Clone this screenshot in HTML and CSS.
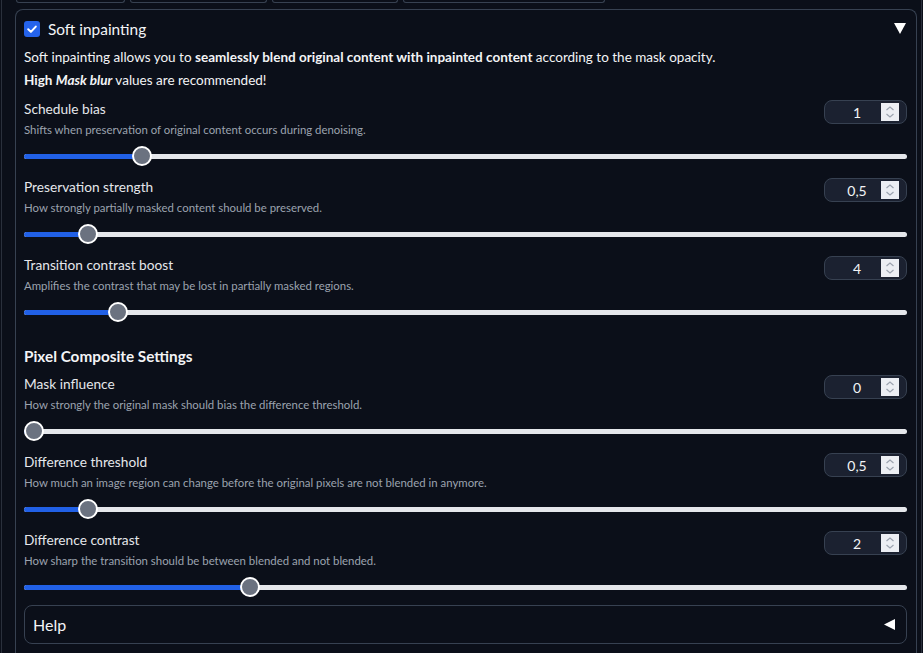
FILE: index.html
```html
<!DOCTYPE html>
<html>
<head>
<meta charset="utf-8">
<link rel="stylesheet" href="styles.css">
</head>
<body>
<div class="page">
  <div class="tabs">
    <span class="tab tab1"></span>
    <span class="tab tab2"></span>
    <span class="tab tab3"></span>
    <span class="tab tab4"></span>
  </div>
  <div class="panel">
    <div class="panel-head">
      <div class="head-left">
        <span class="checkbox">
          <svg viewBox="0 0 16 16" width="16" height="16"><path d="M4.2 8.3 L6.9 10.9 L11.8 5.6" fill="none" stroke="#ffffff" stroke-width="2" stroke-linecap="round" stroke-linejoin="round"/></svg>
        </span>
        <span class="title">Soft inpainting</span>
      </div>
      <svg class="caret" viewBox="0 0 12 11" width="12" height="11"><polygon points="0,0 12,0 6,11" fill="#ffffff"/></svg>
    </div>
    <div class="intro">
      <p>Soft inpainting allows you to <b>seamlessly blend original content with inpainted content</b> according to the mask opacity.</p>
      <p><b>High <i>Mask blur</i></b> values are recommended!</p>
    </div>

    <div class="row">
      <div class="row-head">
        <div class="labels">
          <div class="label">Schedule bias</div>
          <div class="desc">Shifts when preservation of original content occurs during denoising.</div>
        </div>
        <div class="num"><span class="val">1</span><span class="spin"><svg viewBox="0 0 18 18" width="18" height="18"><path d="M5.5 7 L9 4 L12.5 7 M5.5 11 L9 14 L12.5 11" fill="none" stroke="#9ca3af" stroke-width="1.2"/></svg></span></div>
      </div>
      <div class="slider"><div class="track"><div class="rail"><div class="fill" style="width:12.5%"></div><div class="thumb" style="left:12.5%"></div></div></div></div>
    </div>

    <div class="row">
      <div class="row-head">
        <div class="labels">
          <div class="label">Preservation strength</div>
          <div class="desc">How strongly partially masked content should be preserved.</div>
        </div>
        <div class="num"><span class="val">0,5</span><span class="spin"><svg viewBox="0 0 18 18" width="18" height="18"><path d="M5.5 7 L9 4 L12.5 7 M5.5 11 L9 14 L12.5 11" fill="none" stroke="#9ca3af" stroke-width="1.2"/></svg></span></div>
      </div>
      <div class="slider"><div class="track"><div class="rail"><div class="fill" style="width:6.25%"></div><div class="thumb" style="left:6.25%"></div></div></div></div>
    </div>

    <div class="row">
      <div class="row-head">
        <div class="labels">
          <div class="label">Transition contrast boost</div>
          <div class="desc">Amplifies the contrast that may be lost in partially masked regions.</div>
        </div>
        <div class="num"><span class="val">4</span><span class="spin"><svg viewBox="0 0 18 18" width="18" height="18"><path d="M5.5 7 L9 4 L12.5 7 M5.5 11 L9 14 L12.5 11" fill="none" stroke="#9ca3af" stroke-width="1.2"/></svg></span></div>
      </div>
      <div class="slider"><div class="track"><div class="rail"><div class="fill" style="width:9.68%"></div><div class="thumb" style="left:9.68%"></div></div></div></div>
    </div>

    <h3 class="section">Pixel Composite Settings</h3>

    <div class="row">
      <div class="row-head">
        <div class="labels">
          <div class="label">Mask influence</div>
          <div class="desc">How strongly the original mask should bias the difference threshold.</div>
        </div>
        <div class="num"><span class="val">0</span><span class="spin"><svg viewBox="0 0 18 18" width="18" height="18"><path d="M5.5 7 L9 4 L12.5 7 M5.5 11 L9 14 L12.5 11" fill="none" stroke="#9ca3af" stroke-width="1.2"/></svg></span></div>
      </div>
      <div class="slider"><div class="track"><div class="rail"><div class="fill" style="width:0%"></div><div class="thumb" style="left:0%"></div></div></div></div>
    </div>

    <div class="row">
      <div class="row-head">
        <div class="labels">
          <div class="label">Difference threshold</div>
          <div class="desc">How much an image region can change before the original pixels are not blended in anymore.</div>
        </div>
        <div class="num"><span class="val">0,5</span><span class="spin"><svg viewBox="0 0 18 18" width="18" height="18"><path d="M5.5 7 L9 4 L12.5 7 M5.5 11 L9 14 L12.5 11" fill="none" stroke="#9ca3af" stroke-width="1.2"/></svg></span></div>
      </div>
      <div class="slider"><div class="track"><div class="rail"><div class="fill" style="width:6.25%"></div><div class="thumb" style="left:6.25%"></div></div></div></div>
    </div>

    <div class="row">
      <div class="row-head">
        <div class="labels">
          <div class="label">Difference contrast</div>
          <div class="desc">How sharp the transition should be between blended and not blended.</div>
        </div>
        <div class="num"><span class="val">2</span><span class="spin"><svg viewBox="0 0 18 18" width="18" height="18"><path d="M5.5 7 L9 4 L12.5 7 M5.5 11 L9 14 L12.5 11" fill="none" stroke="#9ca3af" stroke-width="1.2"/></svg></span></div>
      </div>
      <div class="slider"><div class="track"><div class="rail"><div class="fill" style="width:25%"></div><div class="thumb" style="left:25%"></div></div></div></div>
    </div>

    <div class="help">
      <span class="help-label">Help</span>
      <svg class="help-caret" viewBox="0 0 11 11" width="11" height="11"><polygon points="11,0 11,11 0,5.5" fill="#ffffff"/></svg>
    </div>
  </div>
</div>
</body>
</html>
```
FILE: styles.css
```css
html, body {
  margin: 0;
  padding: 0;
  background: #0b0f19;
  height: 100%;
  overflow: hidden;
}
body {
  font-family: "Lato", "Noto Sans", sans-serif;
  color: #e5e7eb;
}
.page {
  margin: 0 1px;
  border-left: 1px solid #2a303c;
  border-right: 1px solid #2a303c;
  padding: 0 4px 0 13px;
  height: 100%;
  box-sizing: border-box;
}
.tabs {
  display: flex;
  height: 3px;
  margin-bottom: 6px;
}
.tab {
  display: block;
  height: 2px;
  border: 1px solid #374151;
  border-top: none;
  border-radius: 0 0 5px 5px;
  margin-right: 5px;
}
.tab1 { width: 107px; margin-left: 1px; }
.tab2 { width: 135px; }
.tab3 { width: 124px; }
.tab4 { width: 200px; }
.panel {
  border: 1px solid #374151;
  border-bottom: none;
  border-radius: 8px 8px 0 0;
  padding: 7px 9px 20px 8px;
}
.panel-head {
  display: flex;
  justify-content: space-between;
  align-items: center;
  height: 23px;
}
.head-left {
  display: flex;
  align-items: center;
  gap: 8px;
}
.checkbox {
  width: 16px;
  height: 16px;
  background: #2563eb;
  border-radius: 3px;
  display: flex;
  align-items: center;
  justify-content: center;
}
.checkbox svg { display: block; }
.title {
  font-size: 15.4px;
  color: #f3f4f6;
}
.caret {
  display: block;
  margin-right: 1px;
}
.intro {
  margin-top: 6px;
  font-size: 13.5px;
  line-height: 23px;
  color: #f3f4f6;
}
.intro p { margin: 0; }
.intro b { font-weight: 700; }
.row {
  margin-top: 7px;
}
.row + .row { margin-top: 11px; }
.row-head {
  display: flex;
  justify-content: space-between;
  align-items: flex-start;
}
.label {
  font-size: 13.7px;
  line-height: 20px;
  color: #e5e7eb;
}
.desc {
  margin-top: 3px;
  font-size: 11.4px;
  line-height: 16px;
  color: #9ca3af;
}
.num {
  box-sizing: border-box;
  margin-top: 1px;
  width: 83px;
  height: 24px;
  border: 1px solid #374151;
  border-radius: 8px;
  background: #1b2130;
  display: flex;
  align-items: center;
  padding-right: 7px;
}
.val {
  flex: 1;
  text-align: center;
  padding-left: 8px;
  font-size: 14px;
  color: #f3f4f6;
}
.spin {
  width: 18px;
  height: 18px;
  background: #eceef3;
  display: block;
}
.spin svg { display: block; }
.slider {
  margin-top: 8px;
  height: 20px;
  display: flex;
  align-items: center;
}
.track {
  position: relative;
  flex: 1;
  height: 5px;
  border-radius: 3px;
  background: #e5e7eb;
}
.rail {
  position: absolute;
  left: 0;
  right: 20px;
  top: 0;
  height: 5px;
}
.fill {
  height: 5px;
  padding-right: 10px;
  border-radius: 3px 0 0 3px;
  background: #2160e6;
}
.thumb {
  position: absolute;
  top: -7.5px;
  width: 16px;
  height: 16px;
  border: 2px solid #ffffff;
  border-radius: 50%;
  background: #6b7280;
}
.section {
  margin: 23px 0 0 0;
  font-size: 15.3px;
  line-height: 22px;
  font-weight: 700;
  color: #f3f4f6;
}
.section + .row { margin-top: 7px; }
.help {
  margin-top: 8px;
  height: 37px;
  border: 1px solid #374151;
  border-radius: 8px;
  display: flex;
  align-items: center;
  justify-content: space-between;
  padding: 0 11px 0 8px;
}
.help-label {
  font-size: 16px;
  color: #f3f4f6;
}
.help-caret { display: block; }
```
